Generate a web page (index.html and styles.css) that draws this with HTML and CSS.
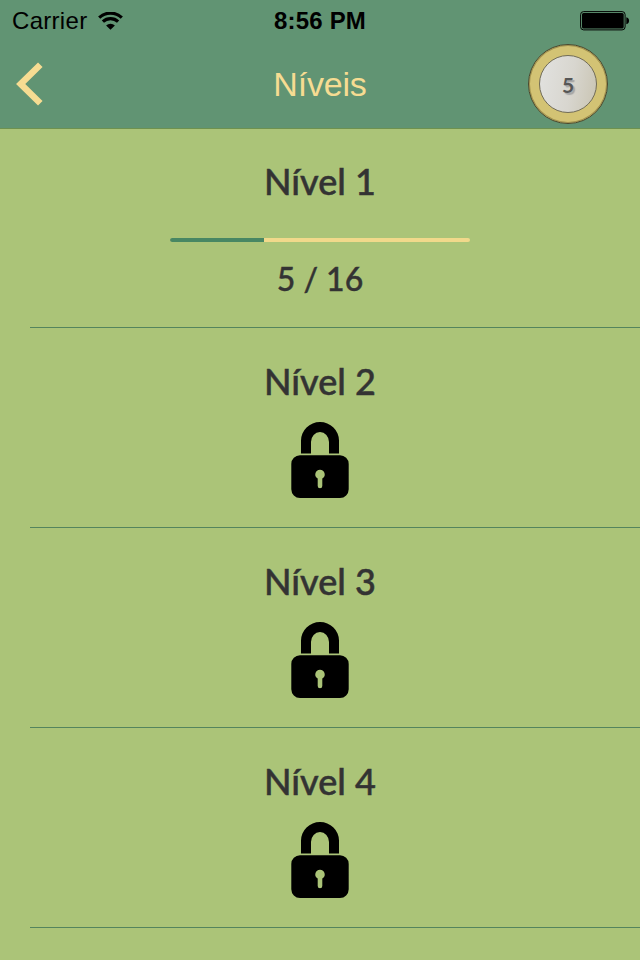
FILE: index.html
```html
<!DOCTYPE html>
<html lang="pt">
<head>
<meta charset="utf-8">
<title>Níveis</title>
<link rel="stylesheet" href="styles.css">
</head>
<body>
<svg width="0" height="0" class="defs" aria-hidden="true">
  <symbol id="lock" viewBox="0 0 58 76">
    <path d="M10 31.500V18.500a19 18.500 0 0 1 38 0v13h-10V20a9 10 0 0 0-18 0v11.500z"/>
    <path fill-rule="evenodd" d="M9 33.300H49a8.700 8.700 0 0 1 8.700 8.700V67.300a8.700 8.700 0 0 1-8.700 8.700H9a8.700 8.700 0 0 1-8.700-8.700V42a8.700 8.700 0 0 1 8.700-8.700zM29 47.800a4.700 4.700 0 0 0-2.300 8.800V64a2.300 2.300 0 0 0 4.600 0v-7.400a4.700 4.700 0 0 0-2.300-8.800z"/>
  </symbol>
</svg>
<header class="header">
  <div class="status">
    <div class="carrier"><span class="carrier-name">Carrier</span>
      <svg class="wifi" width="25" height="18" viewBox="0 0 25 18"><g fill="none" stroke="#000"><path stroke-width="3.200" d="M1.200 5.600a16.500 16.500 0 0 1 22.600 0"/><path stroke-width="3.200" d="M4.900 9.700a11 11 0 0 1 15.200 0"/></g><path d="M8.100 13.400a6.500 6.500 0 0 1 8.800 0L12.500 17.800z"/></svg>
    </div>
    <div class="time">8:56 PM</div>
    <svg class="battery" width="50" height="20" viewBox="0 0 50 20"><rect x=".6" y=".6" width="44.500" height="18.300" rx="3" fill="none" stroke="#000"/><rect x="2" y="2" width="41.700" height="15.500" rx="1.500"/><path d="M46.300 6.200a3.600 3.600 0 0 1 0 7z"/></svg>
  </div>
  <nav class="nav">
    <svg class="back" width="28" height="44" viewBox="0 0 28 44"><path d="M25.300 2.800L5.700 22 25.300 41.200" fill="none" stroke="#f6dc92" stroke-width="6.500"/></svg>
    <h1 class="title">Níveis</h1>
    <div class="coin"><div class="coin-face">5</div></div>
  </nav>
</header>
<main class="levels">
  <section class="level"><h2 class="name">Nível 1</h2><div class="track"><div class="fill"></div></div><p class="score">5 / 16</p></section>
  <section class="level"><h2 class="name">Nível 2</h2><svg class="lock"><use href="#lock"/></svg></section>
  <section class="level"><h2 class="name">Nível 3</h2><svg class="lock"><use href="#lock"/></svg></section>
  <section class="level"><h2 class="name">Nível 4</h2><svg class="lock"><use href="#lock"/></svg></section>
</main>
</body>
</html>
```
FILE: styles.css
```css
* { box-sizing: border-box; }
body {
  margin: 0;
  height: 960px;
  overflow: hidden;
  background: #abc478;
  color: #333;
  font-family: "Liberation Sans", sans-serif;
}
.defs { display: block; }
.header {
  height: 129px;
  background: #619473;
  border-bottom: 1px solid #6e914f;
}
.status {
  display: grid;
  grid-template-columns: 1fr auto 1fr;
  height: 40px;
  padding: 1px 10px 0 12px;
  align-items: center;
  color: #000;
}
.carrier {
  display: flex;
  align-items: center;
  gap: 11px;
  font-size: 24px;
}
.carrier-name { letter-spacing: 0.3px; }
.time {
  margin-left: -2px;
  font: 700 24px/40px "Liberation Sans", sans-serif;
  letter-spacing: 0.2px;
}
.battery { justify-self: end; }
.nav {
  display: grid;
  grid-template-columns: 1fr auto 1fr;
  align-items: center;
  height: 88px;
  padding: 0 32px 0 15px;
}
.title {
  margin: 0 0 0 17px;
  color: #f6dc92;
  font-size: 34px;
  font-weight: 400;
  line-height: 40px;
  letter-spacing: -0.2px;
}
.coin {
  justify-self: end;
  width: 80px;
  height: 80px;
  padding: 10px;
  border: 1px solid #49482f;
  border-radius: 50%;
  background: #d3c374;
  box-shadow: inset 0 0 0 1px #a3934f;
}
.coin-face {
  width: 58px;
  height: 58px;
  border: 1px solid #716c58;
  border-radius: 50%;
  background: linear-gradient(100deg, #e2e2e0, #d8d6cf 55%, #c9c4b2);
  color: #565656;
  font: 700 21px/57px Lato, sans-serif;
  text-align: center;
  text-shadow: 2px 2px 1px #a5a5a5;
}
.level {
  display: flex;
  flex-direction: column;
  align-items: center;
  height: 200px;
  margin-left: 30px;
  padding: 31px 30px 0 0;
  border-bottom: 1px solid #54845d;
}
.level:first-child { height: 199px; padding-top: 30px; }
.name {
  margin: 0;
  font: 500 36px/44px Lato, sans-serif;
  -webkit-text-stroke: 0.5px #333;
}
.track {
  width: 300px;
  height: 4px;
  margin-top: 35px;
  overflow: hidden;
  border-radius: 2px;
  background: #f1d98b;
}
.fill { width: 94px; height: 4px; background: #488763; }
.score {
  margin: 17px 0 0;
  font: 500 32px/40px Lato, sans-serif;
  -webkit-text-stroke: 0.4px #333;
}
.lock { width: 58px; height: 76px; margin-top: 19px; }
```
